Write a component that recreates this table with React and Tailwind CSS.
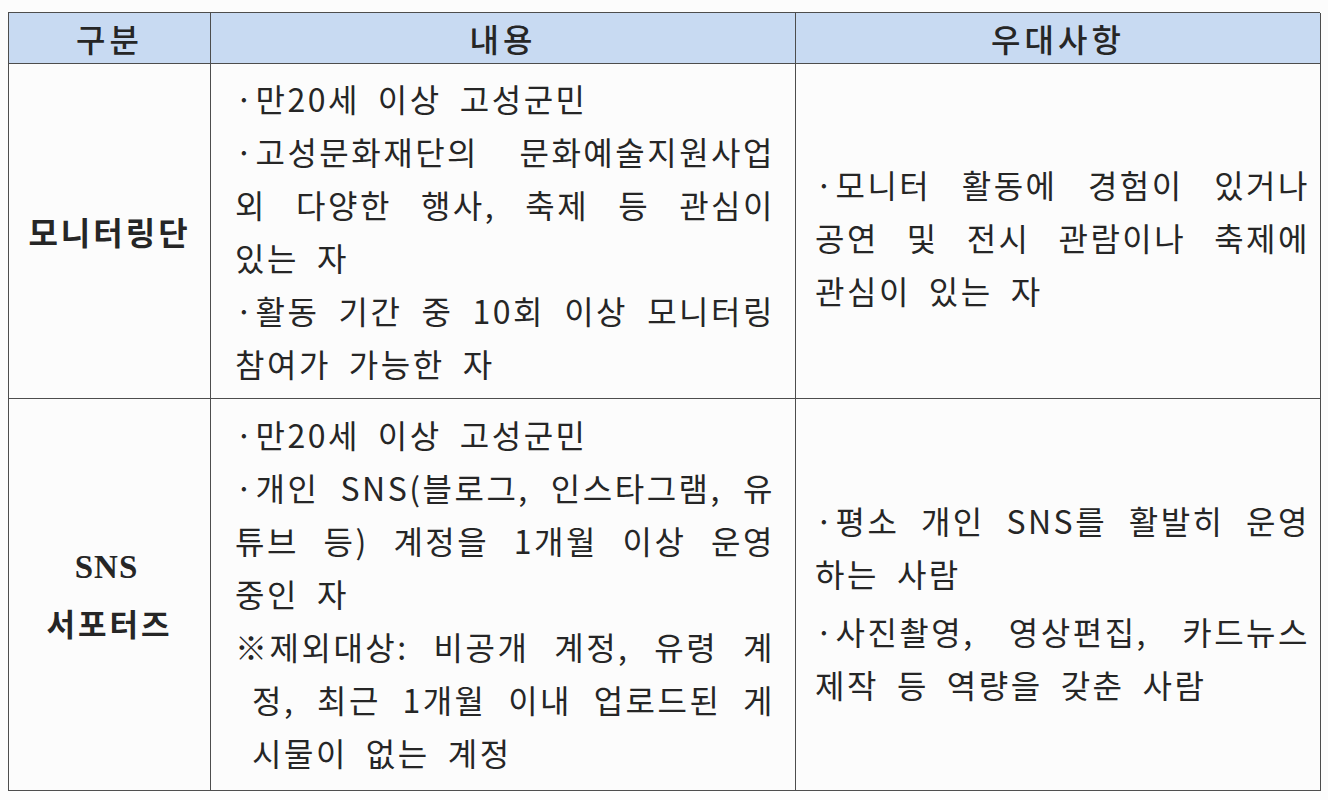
import React from 'react';

const font = "font-['Noto_Sans_CJK_KR','Noto_Sans',sans-serif]";

// One printed line of the scanned table; justified lines spread their words edge to edge.
const Line = ({ text, justify = false, indent = false }) => (
    <div
        className={`flex h-[53px] items-center ${justify ? 'justify-between' : 'gap-[18px]'} ${indent ? 'pl-[17px]' : ''}`}
    >
        {text.split(' ').map((word, i) => (
            <span key={i} className="whitespace-nowrap tracking-[2.5px]">
                {word}
            </span>
        ))}
    </div>
);

const Lines = ({ lines }) =>
    lines.map((l, i) => <Line key={i} text={l[0]} justify={l[1]} indent={l[2]} />);

const monitorContent = [
    ['·만20세 이상 고성군민', false],
    ['·고성문화재단의 문화예술지원사업', true],
    ['외 다양한 행사, 축제 등 관심이', true],
    ['있는 자', false],
    ['·활동 기간 중 10회 이상 모니터링', true],
    ['참여가 가능한 자', false],
];

const monitorPref = [
    ['·모니터 활동에 경험이 있거나', true],
    ['공연 및 전시 관람이나 축제에', true],
    ['관심이 있는 자', false],
];

const snsContent = [
    ['·만20세 이상 고성군민', false],
    ['·개인 SNS(블로그, 인스타그램, 유', true],
    ['튜브 등) 계정을 1개월 이상 운영', true],
    ['중인 자', false],
    ['※제외대상: 비공개 계정, 유령 계', true],
    ['정, 최근 1개월 이내 업로드된 게', true, true],
    ['시물이 없는 계정', false, true],
];

const snsPref = [
    ['·평소 개인 SNS를 활발히 운영', true],
    ['하는 사람', false],
    ['·사진촬영, 영상편집, 카드뉴스', true],
    ['제작 등 역량을 갖춘 사람', false],
];

const cell = 'border-r-[1.5px] border-b-[1.5px] border-[#4d4d4d]';
const head = `${cell} flex h-[51px] items-center justify-center bg-[#c8daf2] text-[32px] font-medium tracking-[4px]`;

export default function App() {
    return (
        <div className={`min-h-[800px] w-[1328px] bg-[#fcfcfc] pl-[8px] pt-[12px] text-[#262626] ${font}`}>
            <div className="grid w-[1312px] grid-cols-[202px_585px_525px] border-l-[1.5px] border-t-[1.5px] border-[#4d4d4d]">
                {/* header */}
                <div className={head}>구분</div>
                <div className={head}>내용</div>
                <div className={head}>우대사항</div>

                {/* 모니터링단 */}
                <div className={`${cell} flex h-[335px] items-center justify-center text-[32px] font-bold tracking-[3px]`}>
                    모니터링단
                </div>
                <div className={`${cell} h-[335px] pl-[24px] pr-[20px] pt-[7px] text-[32px]`}>
                    <Lines lines={monitorContent} />
                </div>
                <div className={`${cell} flex h-[335px] flex-col justify-center pl-[19px] pr-[10px] pt-[12px] text-[32px]`}>
                    <Lines lines={monitorPref} />
                </div>

                {/* SNS 서포터즈 */}
                <div className={`${cell} flex h-[392px] flex-col items-center justify-center pt-[2px] text-[31px] font-bold`}>
                    <div className="flex h-[55px] items-center pr-[6px] font-['Liberation_Serif',serif] text-[33px] tracking-[1px]">SNS</div>
                    <div className="flex h-[55px] items-center tracking-[3px]">서포터즈</div>
                </div>
                <div className={`${cell} h-[392px] pl-[24px] pr-[20px] pt-[8px] text-[32px]`}>
                    <Lines lines={snsContent} />
                </div>
                <div className={`${cell} flex h-[392px] flex-col justify-center pl-[19px] pr-[10px] pt-[14px] text-[32px]`}>
                    <Lines lines={snsPref.slice(0, 2)} />
                    <div className="h-[5px]" />
                    <Lines lines={snsPref.slice(2)} />
                </div>
            </div>
        </div>
    );
}
